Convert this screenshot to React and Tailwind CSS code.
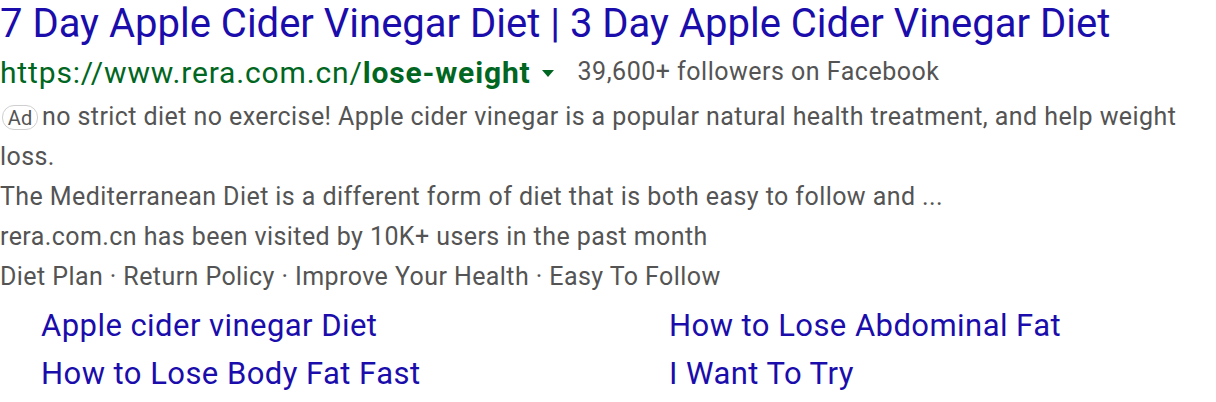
export default function App() {
  return (
    <div className="w-[1216px] h-[402px] bg-white overflow-hidden pt-[1px]" style={{ fontFamily: 'Roboto, "Liberation Sans", sans-serif' }}>
      <div className="text-[40px] leading-[46px] text-[#1a0dab] whitespace-nowrap">
        7 Day Apple Cider Vinegar Diet | 3 Day Apple Cider Vinegar Diet
      </div>
      <div className="flex items-center h-[50px] whitespace-nowrap">
        <span className="text-[30px] tracking-[0.85px] text-[#006621]">
          https://www.rera.com.cn/<span className="font-bold">lose-weight</span>
        </span>
        <svg width="12" height="7" viewBox="0 0 12 7" className="ml-[11px] mt-[2px]">
          <polygon points="0,0 12,0 6,7" fill="#006621" />
        </svg>
        <span className="ml-[24px] text-[25px] tracking-[0.5px] text-[#545454]">39,600+ followers on Facebook</span>
      </div>
      <div className="text-[25px] tracking-[0.42px] leading-[40px] text-[#545454]">
        <div className="flex flex-wrap items-center">
          <span className="flex items-center justify-center border border-[#cfcfcf] rounded-[12px] text-[20px] tracking-normal leading-[24px] h-[25px] w-[36px] ml-[2px] mr-[4px] mt-[1px]">Ad</span>
          <span className="contents">no strict diet no exercise! Apple cider vinegar is a popular natural health treatment, and help weight</span>
          <span className="w-full">loss.</span>
        </div>
        <div>The Mediterranean Diet is a different form of diet that is both easy to follow and ...</div>
        <div>rera.com.cn has been visited by 10K+ users in the past month</div>
        <div>Diet Plan · Return Policy · Improve Your Health · Easy To Follow</div>
      </div>
      <div className="grid grid-cols-[628px_1fr] pl-[41px] mt-[5px] text-[31px] tracking-[0.45px] leading-[48px] text-[#1a0dab] whitespace-nowrap">
        <div>Apple cider vinegar Diet</div>
        <div>How to Lose Abdominal Fat</div>
        <div>How to Lose Body Fat Fast</div>
        <div>I Want To Try</div>
      </div>
    </div>
  );
}
